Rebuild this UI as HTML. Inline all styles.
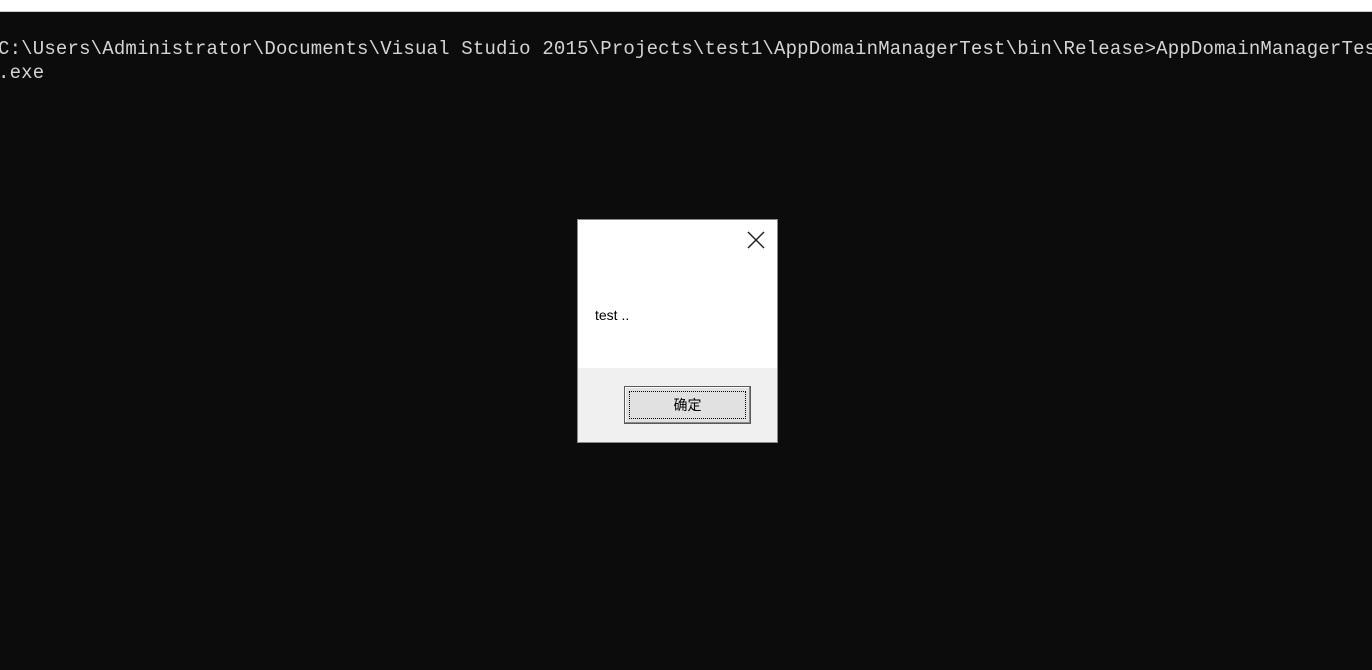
<!DOCTYPE html>
<html><head><meta charset="utf-8"><style>
html,body{margin:0;padding:0;width:1372px;height:670px;overflow:hidden;background:#0c0c0c}
.top{position:absolute;left:0;top:0;width:1372px;height:11px;background:#fff;border-bottom:1px solid #ccc}
.con{position:absolute;left:-2px;top:37px;font-family:"Liberation Mono",monospace;font-size:19px;line-height:24px;color:#d4d4d4;white-space:pre;letter-spacing:0.18px}
.dlg{position:absolute;left:577px;top:219px;width:199px;height:222px;background:#fff;border:1px solid #8a8a8a}
.foot{position:absolute;left:0;top:148px;width:199px;height:74px;background:#f0f0f0}
.msg{position:absolute;left:17px;top:87px;font-family:"Liberation Sans",sans-serif;font-size:14px;color:#000}
.x{position:absolute;left:169px;top:11px}
.btn{position:absolute;left:46px;top:166px;width:127px;height:38px;box-sizing:border-box;border:1px solid #5a5a5a;background:#e1e1e1;box-shadow:inset -1px -1px 0 #888,inset 1px 1px 0 #fff}
.btn .in{position:absolute;left:4px;top:4px;right:4px;bottom:4px;border:1px dotted #000;font-family:"Liberation Sans","Noto Sans CJK SC",sans-serif;font-size:14px;text-align:center;line-height:27px}
</style></head><body>
<div class="top"></div>
<div class="con">C:\Users\Administrator\Documents\Visual Studio 2015\Projects\test1\AppDomainManagerTest\bin\Release>AppDomainManagerTest
.exe</div>
<div class="dlg">
<svg class="x" width="18" height="18" viewBox="0 0 18 18"><path d="M1 1L17 17M17 1L1 17" stroke="#222" stroke-width="1.5"/></svg>
<div class="msg">test ..</div>
<div class="foot"></div>
<div class="btn"><div class="in">确定</div></div>
</div>
</body></html>
